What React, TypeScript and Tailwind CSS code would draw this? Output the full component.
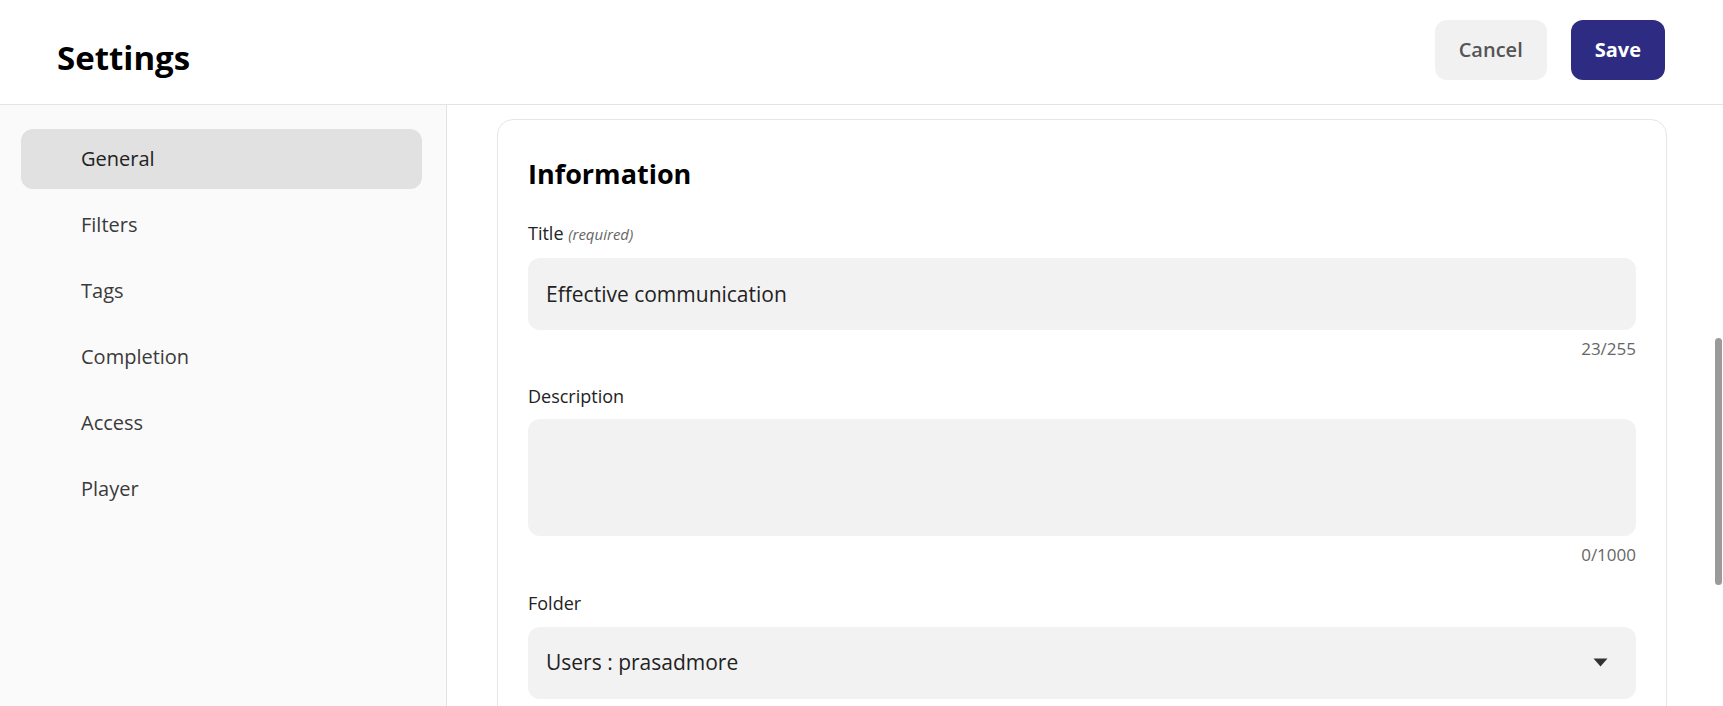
import React, { useState } from 'react';

const sections = ['General', 'Filters', 'Tags', 'Completion', 'Access', 'Player'];

const Counter: React.FC<{ value: string }> = ({ value }) => (
  <div className="mt-[8px] text-right text-[17px] leading-[22px] text-[#666]">{value}</div>
);

export default function App() {
  const [active, setActive] = useState('General');
  const [title, setTitle] = useState('Effective communication');
  const [description, setDescription] = useState('');

  return (
    <div
      className="flex h-screen flex-col overflow-hidden bg-white text-[#222]"
      style={{ fontFamily: '"Open Sans", "Liberation Sans", sans-serif' }}
    >
      {/* Top bar */}
      <header className="flex h-[105px] shrink-0 items-center justify-between border-b border-[#e3e3e3] pl-[57px] pr-[58px]">
        <h1 className="pt-[12px] text-[33px] font-bold leading-[40px] text-black">Settings</h1>
        <div className="flex items-center gap-[24px] pb-[5px]">
          <button className="h-[60px] rounded-[12px] bg-[#f1f1f1] px-[24px] text-[20px] font-semibold text-[#555]">
            Cancel
          </button>
          <button className="h-[60px] rounded-[12px] bg-[#2d2c82] px-[24px] text-[20px] font-bold text-white">
            Save
          </button>
        </div>
      </header>

      <div className="flex min-h-0 flex-1">
        {/* Section nav */}
        <nav className="flex w-[447px] shrink-0 flex-col gap-[6px] border-r border-[#e3e3e3] bg-[#fafafa] pl-[21px] pr-[24px] pt-[24px]">
          {sections.map(s => (
            <button
              key={s}
              onClick={() => setActive(s)}
              className={`flex h-[60px] items-center rounded-[12px] pl-[60px] text-left text-[20px] ${
                active === s ? 'bg-[#e1e1e1] text-[#222]' : 'text-[#3b3b3b]'
              }`}
            >
              {s}
            </button>
          ))}
        </nav>

        {/* Form area */}
        <main className="relative min-w-0 flex-1 overflow-hidden pl-[50px] pr-[56px] pt-[14px]">
          <section className="rounded-[16px] border border-[#e6e6e6] px-[30px] pb-[32px] pt-[36px]">
            <h2 className="text-[27px] font-bold leading-[36px] text-black">Information</h2>

            <label className="mt-[29px] block text-[18px] leading-[24px] text-[#222]">
              Title <span className="text-[15px] italic text-[#666]">(required)</span>
            </label>
            <input
              value={title}
              onChange={e => setTitle(e.target.value)}
              className="mt-[12px] block h-[72px] w-full rounded-[12px] bg-[#f2f2f2] px-[18px] text-[21px] text-[#222] outline-none"
            />
            <Counter value={`${title.length}/255`} />

            <label className="mt-[24px] block text-[18px] leading-[24px] text-[#222]">Description</label>
            <textarea
              value={description}
              onChange={e => setDescription(e.target.value)}
              className="mt-[11px] block h-[117px] w-full resize-none rounded-[12px] bg-[#f2f2f2] px-[18px] py-[16px] text-[21px] text-[#222] outline-none"
            />
            <Counter value={`${description.length}/1000`} />

            <label className="mt-[25px] block text-[18px] leading-[24px] text-[#222]">Folder</label>
            <div className="mt-[12px] flex h-[72px] w-full items-center justify-between rounded-[12px] bg-[#f2f2f2] pl-[18px] pr-[28px] text-[21px] text-[#222]">
              <span>Users : prasadmore</span>
              <svg width="15" height="9" viewBox="0 0 15 9" className="mb-[2px]">
                <path d="M0.5 0.5 H14.5 L7.5 8.5 Z" fill="#333" />
              </svg>
            </div>
          </section>

          {/* scroll thumb */}
          <div className="absolute right-[1px] top-[233px] h-[247px] w-[7px] rounded-full bg-[#9a9a9a]" />
        </main>
      </div>
    </div>
  );
}
